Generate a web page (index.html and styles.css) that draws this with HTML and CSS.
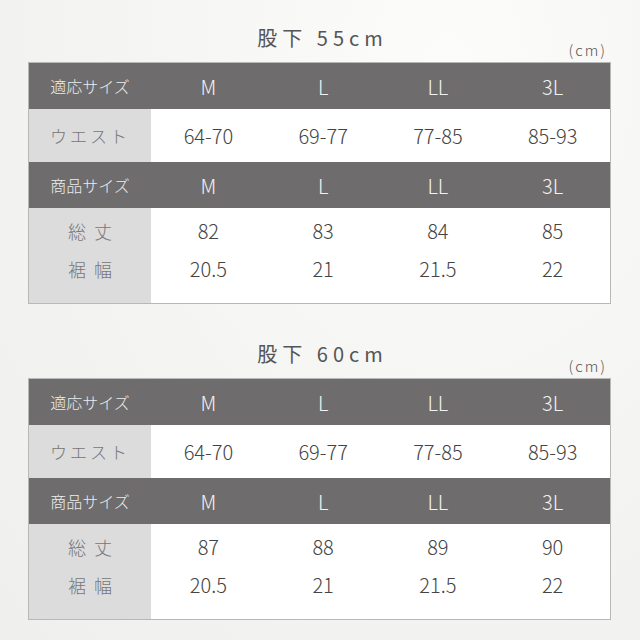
FILE: index.html
```html
<!DOCTYPE html>
<html lang="ja">
<head>
<meta charset="utf-8">
<link rel="stylesheet" href="styles.css">
</head>
<body>
<div class="page">
  <section class="block">
    <h2 class="title">股下 55cm</h2>
    <div class="unit">(cm)</div>
    <div class="table">
      <div class="row head"><div class="label">適応サイズ</div><div>M</div><div>L</div><div>LL</div><div>3L</div></div>
      <div class="row waist"><div class="label">ウエスト</div><div>64-70</div><div>69-77</div><div>77-85</div><div>85-93</div></div>
      <div class="row head"><div class="label">商品サイズ</div><div>M</div><div>L</div><div>LL</div><div>3L</div></div>
      <div class="row data">
        <div class="label"><span>総丈</span><span>裾幅</span></div>
        <div><span>82</span><span>20.5</span></div>
        <div><span>83</span><span>21</span></div>
        <div><span>84</span><span>21.5</span></div>
        <div><span>85</span><span>22</span></div>
      </div>
    </div>
  </section>
  <section class="block">
    <h2 class="title">股下 60cm</h2>
    <div class="unit">(cm)</div>
    <div class="table">
      <div class="row head"><div class="label">適応サイズ</div><div>M</div><div>L</div><div>LL</div><div>3L</div></div>
      <div class="row waist"><div class="label">ウエスト</div><div>64-70</div><div>69-77</div><div>77-85</div><div>85-93</div></div>
      <div class="row head"><div class="label">商品サイズ</div><div>M</div><div>L</div><div>LL</div><div>3L</div></div>
      <div class="row data">
        <div class="label"><span>総丈</span><span>裾幅</span></div>
        <div><span>87</span><span>20.5</span></div>
        <div><span>88</span><span>21</span></div>
        <div><span>89</span><span>21.5</span></div>
        <div><span>90</span><span>22</span></div>
      </div>
    </div>
  </section>
</div>
</body>
</html>
```
FILE: styles.css
```css
* { box-sizing: border-box; }
html, body { margin: 0; padding: 0; }
body {
  width: 640px;
  height: 640px;
  overflow: hidden;
  background: radial-gradient(ellipse at 70% 10%, #fcfcfb 0%, #f4f4f2 55%, #efefed 100%);
  font-family: "Noto Sans CJK JP", "Noto Sans", sans-serif;
  color: #444;
}
.page {
  display: flex;
  flex-direction: column;
  gap: 36px;
  padding-top: 24px;
}
.block {
  display: flex;
  flex-direction: column;
}
.title {
  margin: 0;
  text-align: center;
  font-weight: 400;
  font-size: 20px;
  line-height: 28px;
  letter-spacing: 5px;
  color: #555;
  padding-left: 5px;
}
.unit {
  margin: -9px 33px 0 0;
  text-align: right;
  font-size: 15px;
  line-height: 14px;
  color: #555;
  font-weight: 300;
  letter-spacing: 2px;
}
.table {
  margin: 5px 0 0 28px;
  width: 583px;
  border: 1px solid #b8b8b8;
  display: flex;
  flex-direction: column;
}
.row {
  display: grid;
  grid-template-columns: 122px repeat(4, 1fr);
  align-items: center;
  text-align: center;
  font-size: 20px;
  font-weight: 300;
}
.row > div {
  height: 100%;
  display: flex;
  align-items: center;
  justify-content: center;
}
.head {
  height: 46px;
  background: #6e6c6c;
  color: #f2f2f2;
}
.waist {
  height: 53px;
  background: #fff;
}
.label {
  background: #dcdcdc;
  color: #777;
  font-size: 17px;
  letter-spacing: 3px;
}
.head .label {
  background: transparent;
  color: #ececec;
  font-size: 16px;
  letter-spacing: 0;
}
.data {
  height: 95px;
  background: #fff;
}
.data > div {
  flex-direction: column;
  gap: 8px;
  padding-bottom: 12px;
}
.data > div > span {
  line-height: 30px;
}
.data .label {
  letter-spacing: 8px;
  padding-left: 8px;
  font-size: 18px;
}
```
